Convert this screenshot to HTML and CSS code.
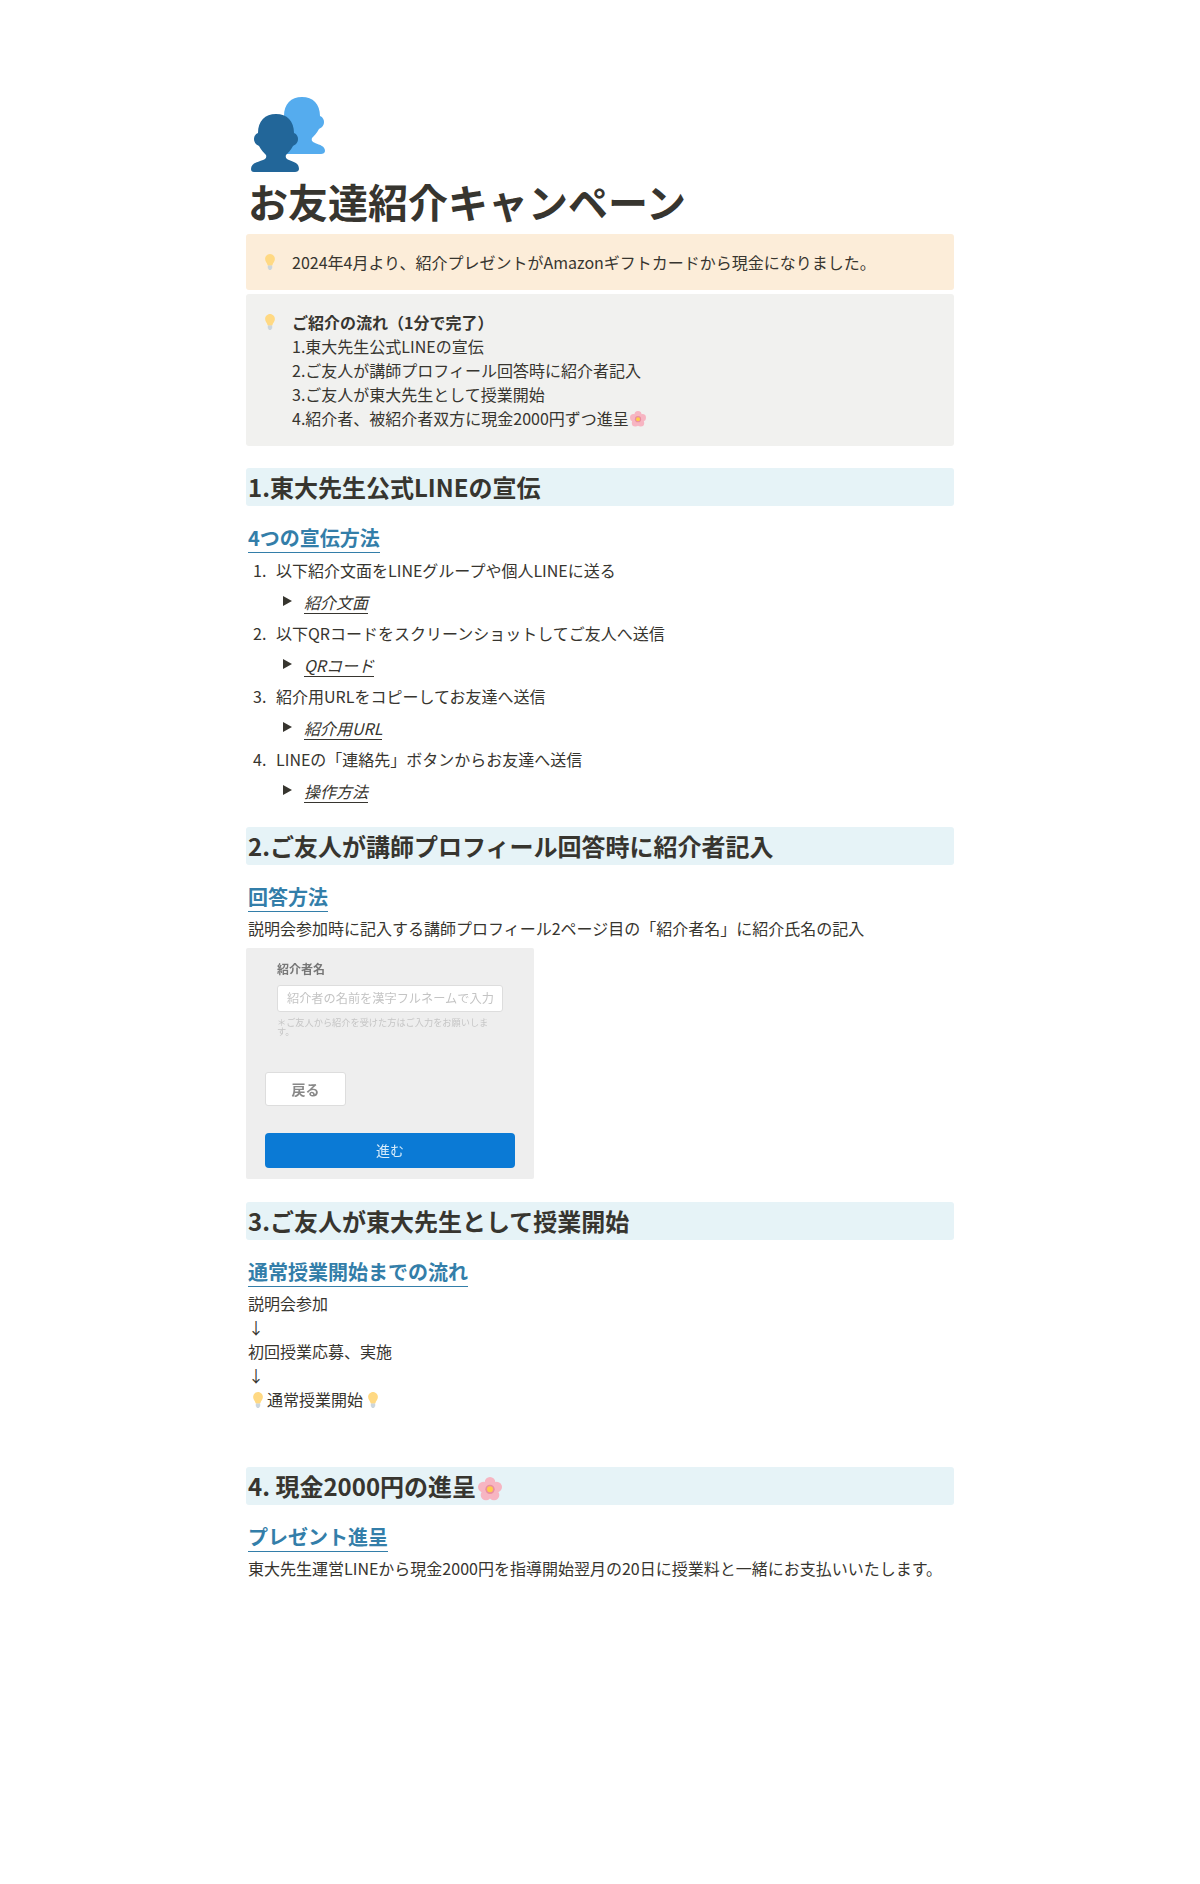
FILE: index.html
```html
<!DOCTYPE html>
<html lang="ja">
<head>
<meta charset="utf-8">
<title>お友達紹介キャンペーン</title>
<link rel="stylesheet" href="styles.css">
</head>
<body>
<svg class="defs" width="0" height="0" aria-hidden="true">
  <symbol id="bulb" viewBox="0 0 36 36">
    <path fill="#ffd983" d="M29 11.300c0 6-4.600 8.800-5.500 13.600-.3 1.400-1.300 1.600-2.400 1.600h-6.200c-1.100 0-2.100-.2-2.400-1.600C11.600 20.100 7 17.300 7 11.300 7 5.300 11.900 0 18 0s11 5.300 11 11.300z"/>
    <path fill="#ccd6dd" d="M23 31.500c0 .8-.6 1.500-1.500 1.500 0 1.700-1.500 3-3.500 3s-3.500-1.300-3.500-3c-.9 0-1.500-.7-1.500-1.500v-4.500c0-.8.700-1 1.500-1h7c.8 0 1.500.2 1.500 1z"/>
  </symbol>
  <symbol id="blossom" viewBox="0 0 36 36">
    <g fill="#f7b5c2">
      <circle cx="18" cy="8" r="8"/>
      <circle cx="28" cy="15" r="8"/>
      <circle cx="24" cy="27" r="8"/>
      <circle cx="12" cy="27" r="8"/>
      <circle cx="8" cy="15" r="8"/>
    </g>
    <circle cx="18" cy="18.500" r="7" fill="#ea8f9f"/>
    <circle cx="18" cy="18.500" r="4.500" fill="#ffcc4d"/>
  </symbol>
</svg>

<main class="page">
  <svg class="page-icon" viewBox="0 0 74 75" aria-hidden="true">
    <path fill="#55acee" transform="translate(26 -17)" d="M25 17C36 17 43 24 43 36C46 37 47 40 47 42C47 46 44 48 42 49C40 53 37 56 35 58C34 61 36 62 38 63C43 65 48 66 48 71C48 73 46 74 44 74H3C1 74 0 73 0 71C0 66 7 65 12 63C14 62 16 61 15 58C13 56 10 53 8 49C6 48 3 46 3 42C3 40 4 37 7 36C7 24 14 17 25 17Z"/>
    <path fill="#226699" d="M25 17C36 17 43 24 43 36C46 37 47 40 47 42C47 46 44 48 42 49C40 53 37 56 35 58C34 61 36 62 38 63C43 65 48 66 48 72C48 74 46 75 44 75H3C1 75 0 74 0 72C0 66 7 65 12 63C14 62 16 61 15 58C13 56 10 53 8 49C6 48 3 46 3 42C3 40 4 37 7 36C7 24 14 17 25 17Z"/>
  </svg>
  <h1 class="title">お友達紹介キャンペーン</h1>

  <div class="callout callout-orange">
    <svg class="emoji callout-bulb"><use href="#bulb"/></svg>
    <div>2024年4月より、紹介プレゼントがAmazonギフトカードから現金になりました。</div>
  </div>
  <div class="callout callout-gray">
    <svg class="emoji callout-bulb"><use href="#bulb"/></svg>
    <div>
      <strong>ご紹介の流れ（1分で完了）</strong><br>
      1.東大先生公式LINEの宣伝<br>
      2.ご友人が講師プロフィール回答時に紹介者記入<br>
      3.ご友人が東大先生として授業開始<br>
      4.紹介者、被紹介者双方に現金2000円ずつ進呈<svg class="emoji emoji-tight"><use href="#blossom"/></svg>
    </div>
  </div>

  <h2 class="section section-1">1.東大先生公式LINEの宣伝</h2>
  <h3 class="sub"><span class="sub-text">4つの宣伝方法</span></h3>
  <ol class="steps">
    <li class="step">
      <div class="step-text">以下紹介文面をLINEグループや個人LINEに送る</div>
      <div class="toggle"><span class="arrow"></span><em class="toggle-text">紹介文面</em></div>
    </li>
    <li class="step">
      <div class="step-text">以下QRコードをスクリーンショットしてご友人へ送信</div>
      <div class="toggle"><span class="arrow"></span><em class="toggle-text">QRコード</em></div>
    </li>
    <li class="step">
      <div class="step-text">紹介用URLをコピーしてお友達へ送信</div>
      <div class="toggle"><span class="arrow"></span><em class="toggle-text">紹介用URL</em></div>
    </li>
    <li class="step">
      <div class="step-text">LINEの「連絡先」ボタンからお友達へ送信</div>
      <div class="toggle"><span class="arrow"></span><em class="toggle-text">操作方法</em></div>
    </li>
  </ol>

  <h2 class="section section-2">2.ご友人が講師プロフィール回答時に紹介者記入</h2>
  <h3 class="sub"><span class="sub-text">回答方法</span></h3>
  <p class="para">説明会参加時に記入する講師プロフィール2ページ目の「紹介者名」に紹介氏名の記入</p>

  <div class="shot">
    <div class="shot-field">
      <div class="shot-label">紹介者名</div>
      <div class="shot-input">紹介者の名前を漢字フルネームで入力</div>
      <div class="shot-note">＊ご友人から紹介を受けた方はご入力をお願いします。</div>
    </div>
    <div class="shot-back">戻る</div>
    <div class="shot-next">進む</div>
  </div>

  <h2 class="section section-3">3.ご友人が東大先生として授業開始</h2>
  <h3 class="sub"><span class="sub-text">通常授業開始までの流れ</span></h3>
  <p class="para">説明会参加<br>↓<br>初回授業応募、実施<br>↓<br><svg class="emoji"><use href="#bulb"/></svg>通常授業開始<svg class="emoji"><use href="#bulb"/></svg></p>

  <h2 class="section section-4">4. 現金2000円の進呈<svg class="emoji emoji-large"><use href="#blossom"/></svg></h2>
  <h3 class="sub"><span class="sub-text">プレゼント進呈</span></h3>
  <p class="para">東大先生運営LINEから現金2000円を指導開始翌月の20日に授業料と一緒にお支払いいたします。</p>
</main>
</body>
</html>
```

FILE: styles.css
```css
* { box-sizing: border-box; }
html, body { margin: 0; padding: 0; background: #fff; }
body {
  font-family: "Noto Sans CJK JP", "Noto Sans", sans-serif;
  font-size: 16px;
  line-height: 24px;
  color: #37352f;
  height: 1884px;
}
.defs { position: absolute; }
.page {
  width: 708px;
  margin: 0 auto;
  padding-top: 97px;
  display: flex;
  flex-direction: column;
  align-items: stretch;
}
.page-icon { width: 74px; height: 75px; margin-left: 5px; display: block; }
.title {
  margin: 0;
  padding: 0 2px;
  font-size: 40px;
  line-height: 58px;
  font-weight: 700;
  height: 62px;
}
.emoji { width: 16px; height: 16px; vertical-align: -2px; margin: 0 1px 0 2px; }
.emoji-tight { margin-left: 1px; }
.callout {
  display: flex;
  border-radius: 3px;
  padding: 16px 16px 16px 12px;
}
.callout-bulb { width: 24px; height: 24px; flex: none; margin: 0 10px 0 0; padding: 4px 4px 4px; }
.callout-orange { background: #fcedd9; }
.callout-gray { background: #f1f1ef; margin-top: 4px; }
.callout strong { font-weight: 700; }

.section {
  margin: 0;
  padding: 0 2px;
  background: #e6f3f7;
  font-size: 24px;
  line-height: 38px;
  font-weight: 700;
  border-radius: 3px;
}
.section-1 { margin-top: 22px; }
.section-2 { margin-top: 20px; }
.section-3 { margin-top: 23px; }
.section-4 { margin-top: 56px; }
.emoji-large { width: 24px; height: 24px; vertical-align: -5px; }

.sub {
  margin: 17px 0 0;
  padding: 0 2px;
  font-size: 20px;
  line-height: 30px;
  font-weight: 700;
  color: #337ea9;
}
.sub-text { border-bottom: 1px solid #337ea9; padding-bottom: 0; }

.steps { list-style: none; margin: 2px 0 0; padding: 0; counter-reset: s; }
.step { counter-increment: s; }
.step-text { position: relative; padding-left: 30px; line-height: 31px; height: 31px; }
.step-text::before {
  content: counter(s) ".";
  position: absolute;
  left: 7px;
}
.toggle { display: flex; align-items: center; height: 32px; padding-left: 37px; }
.arrow {
  width: 0; height: 0;
  border-left: 9px solid #37352f;
  border-top: 5px solid transparent;
  border-bottom: 5px solid transparent;
  margin: -3px 12px 0 0;
}
.toggle-text { border-bottom: 1px solid #37352f; line-height: 22px; font-style: italic; }

.para { margin: 4px 0 0; padding: 0 2px; }

.shot {
  width: 288px;
  height: 231px;
  margin-top: 8px;
  background: #eeeeee;
  padding: 12px 19px 11px 19px;
  border-radius: 2px;
  display: flex;
  flex-direction: column;
  filter: blur(.35px);
}
.shot-field { padding-left: 12px; }
.shot-label { font-size: 12px; line-height: 18px; font-weight: 700; color: #777; }
.shot-input {
  width: 226px;
  height: 27px;
  margin-top: 7px;
  background: #fff;
  border: 1px solid #ddd;
  border-radius: 3px;
  padding-left: 9px;
  font-size: 12.200px;
  line-height: 25px;
  color: #c4c4c4;
  white-space: nowrap;
  overflow: hidden;
}
.shot-note { width: 216px; margin-top: 6px; font-size: 9.200px; line-height: 9px; color: #c6c6c6; }
.shot-back {
  width: 81px;
  height: 35px;
  margin-top: 36px;
  background: #fff;
  border: 1px solid #ddd;
  border-radius: 3px;
  font-size: 14px;
  font-weight: 700;
  line-height: 32px;
  text-align: center;
  color: #888;
}
.shot-next {
  width: 250px;
  height: 36px;
  margin-top: 27px;
  background: #0b7ad5;
  border-radius: 4px;
  font-size: 14px;
  line-height: 34px;
  text-align: center;
  color: #d8ecfb;
}
```
